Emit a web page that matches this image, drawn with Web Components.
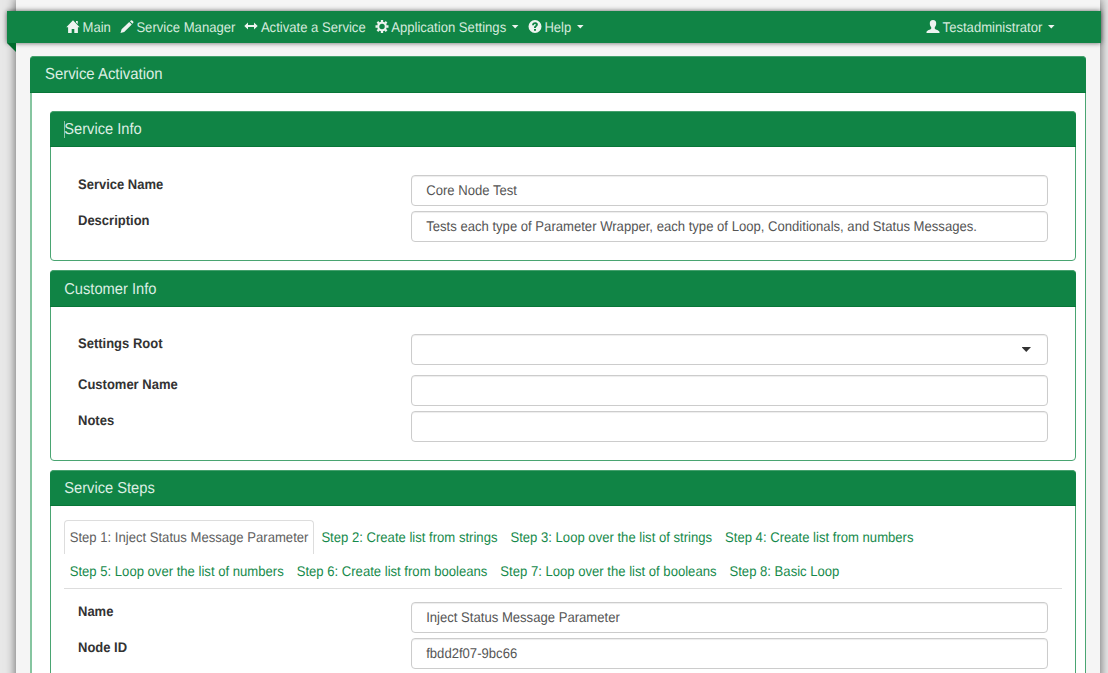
<!DOCTYPE html>
<html lang="en">
<head>
<meta charset="utf-8">
<title>Service Activation</title>
<style>
html,body{margin:0;height:100%}
body{overflow:hidden;background:#e8e8e8;font:13.1px/18px "Liberation Sans",Arial,sans-serif;color:#333;text-rendering:geometricPrecision}
</style>
</head>
<body>
<app-shell>
  <nav-bar slot="nav">
    <nav-item icon="home">Main</nav-item>
    <nav-item icon="pencil">Service Manager</nav-item>
    <nav-item icon="resize">Activate a Service</nav-item>
    <nav-item icon="cog" menu>Application Settings</nav-item>
    <nav-item icon="help" menu>Help</nav-item>
    <nav-item slot="end" icon="user" menu>Testadministrator</nav-item>
  </nav-bar>
  <ui-panel heading="Service Activation" outer>
    <ui-panel heading="Service Info" caret style="height:150px">
      <form-row label="Service Name" value="Core Node Test"></form-row>
      <form-row label="Description" value="Tests each type of Parameter Wrapper, each type of Loop, Conditionals, and Status Messages."></form-row>
    </ui-panel>
    <ui-panel heading="Customer Info" style="height:191px;--head:37px;--pad-top:27px">
      <form-row label="Settings Root" select style="margin-bottom:10px"></form-row>
      <form-row label="Customer Name"></form-row>
      <form-row label="Notes"></form-row>
    </ui-panel>
    <ui-panel heading="Service Steps" style="height:260px;--pad-top:14px">
      <step-tabs>
        <step-tab active>Step 1: Inject Status Message Parameter</step-tab>
        <step-tab>Step 2: Create list from strings</step-tab>
        <step-tab>Step 3: Loop over the list of strings</step-tab>
        <step-tab>Step 4: Create list from numbers</step-tab>
        <step-tab>Step 5: Loop over the list of numbers</step-tab>
        <step-tab>Step 6: Create list from booleans</step-tab>
        <step-tab>Step 7: Loop over the list of booleans</step-tab>
        <step-tab>Step 8: Basic Loop</step-tab>
      </step-tabs>
      <form-row label="Name" value="Inject Status Message Parameter"></form-row>
      <form-row label="Node ID" value="fbdd2f07-9bc66"></form-row>
    </ui-panel>
  </ui-panel>
</app-shell>
<script>
const ICONS={
  home:'<path d="M7 .3 13.7 7.2H11.9V13H8.3V9H5.7V13H2.1V7.2H.3ZM10 1h1.8v3L10 2.4Z"/>',
  pencil:'<path d="M.5 13 1.6 9.3 9.2 1.9 11.8 4.5 4.2 12ZM9.9 1.2 10.9.4Q11.5 0 12.1.5L13.2 1.6Q13.8 2.2 13.3 2.8L12.5 3.7Z"/>',
  resize:'<path d="M.3 6 4 2.5V5H10V2.5L13.7 6 10 9.5V7H4V9.5Z"/>',
  cog:'<g fill="none" stroke="currentColor"><circle cx="7" cy="6.5" r="3.8" stroke-width="2.1"/><path stroke-width="2.3" d="M7 0V2.2M7 10.8V13M.5 6.5H2.7M11.3 6.5H13.5M2.4 1.9 4 3.5M10 9.5 11.6 11.1M11.6 1.9 10 3.5M4 9.5 2.4 11.1"/></g>',
  help:'<path fill-rule="evenodd" d="M7 0a6.5 6.5 0 1 0 0 13A6.5 6.5 0 0 0 7 0ZM6 8.9H8V10.8H6ZM4.1 5.2H6C6 4.3 6.3 3.9 7 3.9 8.2 3.9 8 5.2 7.3 5.6 6.4 6.1 6 6.7 6 8.1H7.9C7.9 6.9 8.5 6.8 9.3 6 10.5 4.6 9.8 2.3 7.2 2.3 5.2 2.3 4.1 3.4 4.1 5.2Z"/>',
  user:'<path d="M7 0C9.2 0 10.3 1.5 10.2 3.5 10.2 5.3 9.5 6.5 8.8 7.3V8.7C9.4 9.7 13.4 10.2 13.5 12V13H.5V12C.6 10.2 4.6 9.7 5.2 8.7V7.3C4.5 6.5 3.8 5.3 3.8 3.5 3.7 1.5 4.8 0 7 0Z"/>'
};
/* Tall, narrow lettering shared by every element that sets text. */
const TALL='display:inline-block;transform:scaleY(1.075);transform-origin:50% 60%;';
class Base extends HTMLElement{
  constructor(){super();this.attachShadow({mode:'open'})}
  connectedCallback(){this.shadowRoot.innerHTML=this.view()}
}
customElements.define('app-shell',class extends Base{view(){return `<style>
:host{display:block;height:673px;overflow:hidden}
.page{box-sizing:border-box;width:1084px;height:720px;margin-left:16px;padding-top:11px;background:#f5f5f5;box-shadow:0 0 9px 1px rgba(0,0,0,.5)}
::slotted(ui-panel){margin:13px 14px 0}
</style><div class="page"><slot name="nav"></slot><slot></slot></div>`}});
customElements.define('nav-bar',class extends Base{view(){return `<style>
:host{display:flex;position:relative;justify-content:space-between;box-sizing:border-box;width:1094px;height:32px;margin-left:-9px;padding:0 46px 0 59px;background:#108445;box-shadow:0 0 5px rgba(0,0,0,.6)}
:host::after{content:"";position:absolute;left:0;top:32px;border-top:9px solid #006b2d;border-left:9px solid transparent}
div{display:flex;gap:9px}
</style><div><slot></slot></div><div><slot name="end"></slot></div>`}});
customElements.define('nav-item',class extends Base{view(){return `<style>
:host{display:flex;align-items:center;height:32px;color:#d5eadd;white-space:nowrap}
span{margin-top:1px;${TALL}}
svg{width:14px;height:13px;margin:-1px 2.5px 0 0;fill:currentColor;color:#eef3f0}
i{width:7.5px;height:4px;margin:-1px 0 0 5.2px;background:#eef3f0;clip-path:polygon(0 0,100% 0,50% 100%)}
</style><svg viewBox="0 0 14 13">${ICONS[this.getAttribute('icon')]}</svg><span><slot></slot></span>${this.hasAttribute('menu')?'<i></i>':''}`}});
customElements.define('ui-panel',class extends Base{view(){const o=this.hasAttribute('outer');return `<style>
:host{display:block;box-sizing:border-box;background:#fff;border:1px solid #4aa572;border-radius:4px;${o?'width:1056px;height:680px;border-left:2px solid #86c5a0':'margin-bottom:9px'}}
header{display:flex;align-items:center;box-sizing:border-box;height:var(--head,36px);margin:-1px -1px 0 ${o?-2:-1}px;padding-left:${o?15:14.2}px;background:#108445;border-top:1px solid #45a06d;border-bottom:1px solid #087638;border-radius:4px 4px 0 0;color:#dceee3;font-size:${o?14.9:14.7}px}
header span{margin-top:${o?1:2}px;${TALL}}
.c{height:17px;width:1px;background:#8fc4a5;margin-right:-1px}
.body{padding:${o?'18px 9px 0 18px':'var(--pad-top,28px) 13px 0 13px'}}
${o?'header{height:37px}':''}
</style><header>${this.hasAttribute('caret')?'<i class="c"></i>':''}<span>${this.getAttribute('heading')}</span></header><div class="body"><slot></slot></div>`}});
customElements.define('form-row',class extends Base{view(){return `<style>
:host{display:grid;grid-template-columns:333px 637px;height:31px;margin:0 0 5px 14px}
b{color:#333;justify-self:start;align-self:start;margin-top:1px;font-size:13px;${TALL}}
span{${TALL}}
.f{display:flex;align-items:center;justify-content:space-between;box-sizing:border-box;height:31px;border:1px solid #ccc;border-radius:4px;padding:0 16px 0 14.2px;color:#555;box-shadow:inset 0 1px 1px rgba(0,0,0,.075)}
i{width:9.5px;height:5px;background:#333;clip-path:polygon(0 0,100% 0,50% 100%)}
</style><b>${this.getAttribute('label')}</b><div class="f"><span>${this.getAttribute('value')||''}</span>${this.hasAttribute('select')?'<i></i>':''}</div>`}});
customElements.define('step-tabs',class extends Base{view(){return `<style>
:host{display:flex;flex-wrap:wrap;column-gap:1.6px;box-sizing:border-box;height:69px;padding-right:60px;margin:0 0 13px;border-bottom:1px solid #ddd;font-size:13.1px}
</style><slot></slot>`}});
customElements.define('step-tab',class extends Base{view(){const a=this.hasAttribute('active');return `<style>
:host{display:block;box-sizing:border-box;height:34px;padding:8px 4.7px;border:1px solid ${a?'#ddd':'transparent'};border-bottom:0;border-radius:4px 4px 0 0;color:${a?'#606060':'#168a4b'};white-space:nowrap}
span{${TALL}}
</style><span><slot></slot></span>`}});
</script>
</body>
</html>
